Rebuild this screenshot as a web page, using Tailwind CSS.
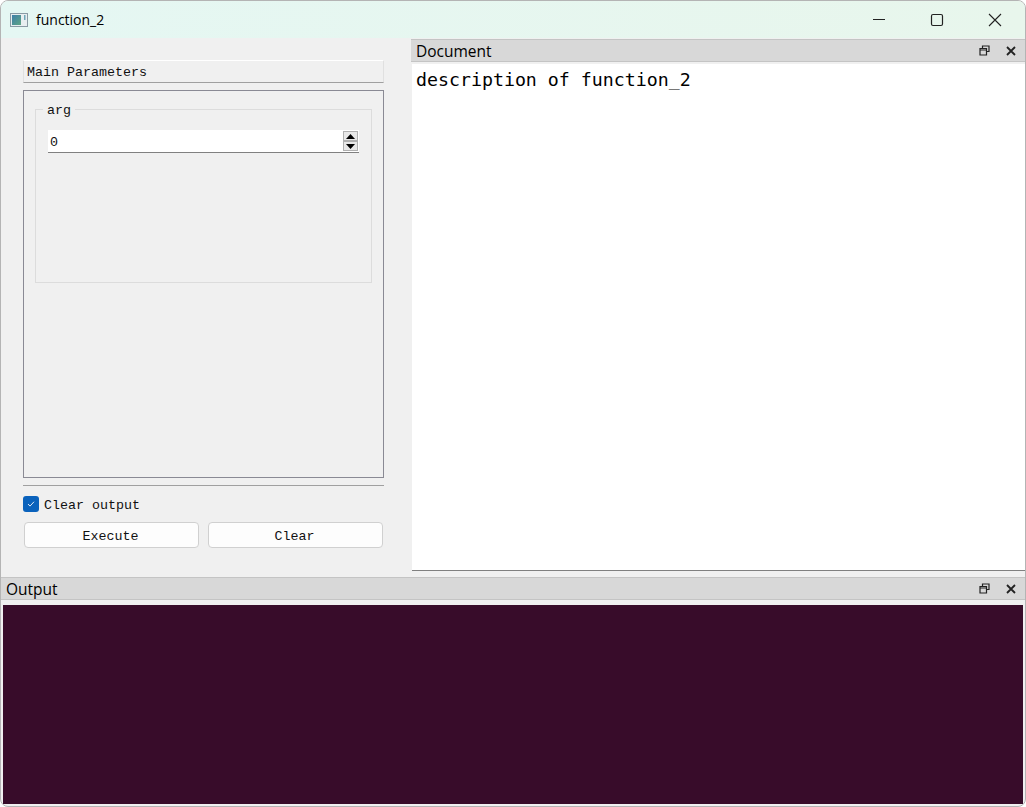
<!DOCTYPE html>
<html lang="en">
<head>
  <meta charset="UTF-8" />
  <title>function_2</title>
  <script src="https://cdn.jsdelivr.net/npm/@tailwindcss/browser@4"></script>
</head>
<body class="bg-white">
  <div class="w-[1026px] h-[807px] flex flex-col bg-[#f0f0f0] border border-[#b4b4b4] rounded-[8px] overflow-hidden font-['Liberation_Mono',monospace] text-[13.33px] text-[#111]">
    <!-- title bar -->
    <header class="h-[37px] shrink-0 flex items-center bg-gradient-to-r from-[#e5f7f3] to-[#e8f6ec]">
      <svg class="ml-[9px] w-[18px] h-[14px]" viewBox="0 0 18 14">
        <defs><linearGradient id="ic" x1="0" y1="0" x2="1" y2="1"><stop offset="0" stop-color="#3f7fa8"/><stop offset="1" stop-color="#5fa585"/></linearGradient></defs>
        <rect x="0.5" y="0.5" width="17" height="13" fill="#e8eef0" stroke="#8a9aa4"/>
        <rect x="2" y="2" width="9" height="10" fill="url(#ic)"/>
        <rect x="14" y="2" width="1.5" height="5" fill="#6fa8b8"/>
      </svg>
      <span class="ml-2 font-['Open_Sans',sans-serif] text-[14px] text-black">function_2</span>
      <div class="ml-auto mr-px flex items-center text-black">
        <svg class="w-[58px] h-[37px]" viewBox="0 0 58 37"><path d="M23 18.5h12" stroke="#222" stroke-width="1"/></svg>
        <svg class="w-[58px] h-[37px]" viewBox="0 0 58 37"><rect x="23.5" y="13.5" width="11" height="11" rx="1.5" fill="none" stroke="#222" stroke-width="1.2"/></svg>
        <svg class="w-[58px] h-[37px]" viewBox="0 0 58 37"><path d="M23 13l12 12M35 13L23 25" stroke="#222" stroke-width="1.1"/></svg>
      </div>
    </header>

    <div class="flex h-[539px] shrink-0">
      <!-- left panel -->
      <aside class="w-[410px] shrink-0 pl-[22px] pr-[27px] pt-[22px] flex flex-col">
        <div class="h-[23px] flex items-center pl-[3px] pt-[2px] border-t border-t-white border-b border-b-[#a0a0a0] border-x border-x-[#e0e0e0]">Main Parameters</div>
        <div class="mt-[7px] h-[388px] border border-[#8a8a94] px-[11px] pt-[18px]">
          <div class="relative h-[174px] border border-[#dcdcdc] pt-[20px] pl-3 pr-3">
            <span class="absolute -top-[9px] left-[7px] bg-[#f0f0f0] px-1">arg</span>
            <div class="h-[23px] flex bg-white border-b border-b-[#808080] pl-[2px] pr-[1px]">
              <span class="pt-[3px]">0</span>
              <div class="ml-auto mt-px flex flex-col">
                <div class="w-[15px] h-[10px] flex items-center justify-center bg-[#e8e8e8] border border-[#b0b0b0]"><svg class="w-[9px] h-[5px]" viewBox="0 0 9 5"><path d="M4.5 0L9 5H0z" fill="#000"/></svg></div>
                <div class="w-[15px] h-[10px] flex items-center justify-center bg-[#e8e8e8] border border-[#b0b0b0]"><svg class="w-[9px] h-[5px]" viewBox="0 0 9 5"><path d="M0 0h9L4.5 5z" fill="#000"/></svg></div>
              </div>
            </div>
          </div>
        </div>
        <div class="mt-[7px] h-px bg-[#a0a0a0]"></div>
        <label class="mt-[10px] h-4 flex items-center">
          <span class="w-4 h-4 rounded-[3px] bg-[#0a62bc] flex items-center justify-center">
            <svg class="w-[8px] h-[6px]" viewBox="0 0 10 8"><path d="M1 4l2.7 2.8L9 1" fill="none" stroke="#e4eef8" stroke-width="1.3"/></svg>
          </span>
          <span class="ml-[5px] pt-[3px]">Clear output</span>
        </label>
        <div class="mt-[10px] px-px flex gap-[9px]">
          <button class="flex-1 h-[26px] pt-[3px] pr-[2px] bg-[#fdfdfd] border border-[#d0d0d0] rounded-[4px]">Execute</button>
          <button class="flex-1 h-[26px] pt-[3px] pr-[2px] bg-[#fdfdfd] border border-[#d0d0d0] rounded-[4px]">Clear</button>
        </div>
      </aside>

      <!-- document dock -->
      <section class="flex-1 flex flex-col pt-[1px] pb-[6px]">
        <div class="h-[23px] shrink-0 flex items-center bg-[#d8d8d8] border-y border-[#c4c4c4] pl-[5px] font-['Open_Sans',sans-serif] text-[15.5px] text-black">
          <span class="pt-[2px]">Document</span>
          <svg class="ml-auto w-[11px] h-[11px]" viewBox="0 0 11 11"><path d="M3.5 3V1h6.5v5.5H8M1 3.5h6.5V10H1zM1 5h6.5" fill="none" stroke="#222" stroke-width="1.2"/></svg>
          <svg class="ml-[16px] mr-[9px] w-[10px] h-[10px]" viewBox="0 0 10 10"><path d="M1 1l8 8M9 1L1 9" stroke="#222" stroke-width="1.8"/></svg>
        </div>
        <div class="mt-[2px] flex-1 ml-px bg-white border-b border-[#808080] pl-1 pt-[3px] font-['DejaVu_Sans_Mono',monospace] text-[18.25px] leading-[26px] text-black">description of function_2</div>
      </section>
    </div>

    <!-- output dock -->
    <section class="flex-1 flex flex-col">
      <div class="h-[23px] shrink-0 flex items-center bg-[#d8d8d8] border-y border-[#c4c4c4] pl-[5px] font-['Open_Sans',sans-serif] text-[15.5px] text-black">
        <span class="pt-[2px]">Output</span>
        <svg class="ml-auto w-[11px] h-[11px]" viewBox="0 0 11 11"><path d="M3.5 3V1h6.5v5.5H8M1 3.5h6.5V10H1zM1 5h6.5" fill="none" stroke="#222" stroke-width="1.2"/></svg>
        <svg class="ml-[16px] mr-[9px] w-[10px] h-[10px]" viewBox="0 0 10 10"><path d="M1 1l8 8M9 1L1 9" stroke="#222" stroke-width="1.8"/></svg>
      </div>
      <div class="flex-1 mt-[5px] mx-[2px] mb-[2px] bg-[#380c2a]"></div>
    </section>
  </div>
</body>
</html>
